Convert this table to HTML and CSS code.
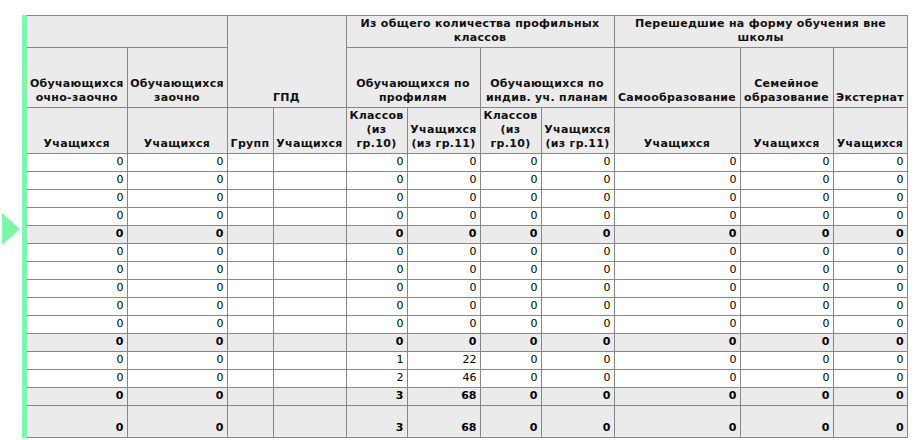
FILE: index.html
```html
<!DOCTYPE html>
<html lang="ru">
<head>
<meta charset="utf-8">
<title>Отчёт</title>
<link rel="stylesheet" href="styles.css">
</head>
<body>
<div class="wrap">
  <svg class="marker" width="18" height="32" viewBox="0 0 18 32"><polygon points="0,0 18,16 0,32" fill="#7ff5a8"/></svg>
  <div class="grid-box">
    <table class="grid">
      <colgroup>
        <col class="w100"><col class="w100"><col class="w46"><col class="w73">
        <col class="w61"><col class="w73"><col class="w61"><col class="w73">
        <col class="w126"><col class="w93"><col class="w74">
      </colgroup>
      <thead>
        <tr class="h1">
          <th colspan="2"></th>
          <th colspan="2" rowspan="2">ГПД</th>
          <th colspan="4">Из общего количества профильных<br>классов</th>
          <th colspan="3">Перешедшие на форму обучения вне<br>школы</th>
        </tr>
        <tr class="h2">
          <th>Обучающихся очно-заочно</th>
          <th>Обучающихся заочно</th>
          <th colspan="2">Обучающихся по профилям</th>
          <th colspan="2">Обучающихся по индив. уч. планам</th>
          <th>Самообразование</th>
          <th>Семейное образование</th>
          <th>Экстернат</th>
        </tr>
        <tr class="h3">
          <th>Учащихся</th>
          <th>Учащихся</th>
          <th>Групп</th>
          <th>Учащихся</th>
          <th>Классов (из гр.10)</th>
          <th>Учащихся (из гр.11)</th>
          <th>Классов (из гр.10)</th>
          <th>Учащихся (из гр.11)</th>
          <th>Учащихся</th>
          <th>Учащихся</th>
          <th>Учащихся</th>
        </tr>
      </thead>
      <tbody>
        <tr><td>0</td><td>0</td><td></td><td></td><td>0</td><td>0</td><td>0</td><td>0</td><td>0</td><td>0</td><td>0</td></tr>
        <tr><td>0</td><td>0</td><td></td><td></td><td>0</td><td>0</td><td>0</td><td>0</td><td>0</td><td>0</td><td>0</td></tr>
        <tr><td>0</td><td>0</td><td></td><td></td><td>0</td><td>0</td><td>0</td><td>0</td><td>0</td><td>0</td><td>0</td></tr>
        <tr><td>0</td><td>0</td><td></td><td></td><td>0</td><td>0</td><td>0</td><td>0</td><td>0</td><td>0</td><td>0</td></tr>
        <tr class="sum"><td>0</td><td>0</td><td></td><td></td><td>0</td><td>0</td><td>0</td><td>0</td><td>0</td><td>0</td><td>0</td></tr>
        <tr><td>0</td><td>0</td><td></td><td></td><td>0</td><td>0</td><td>0</td><td>0</td><td>0</td><td>0</td><td>0</td></tr>
        <tr><td>0</td><td>0</td><td></td><td></td><td>0</td><td>0</td><td>0</td><td>0</td><td>0</td><td>0</td><td>0</td></tr>
        <tr><td>0</td><td>0</td><td></td><td></td><td>0</td><td>0</td><td>0</td><td>0</td><td>0</td><td>0</td><td>0</td></tr>
        <tr><td>0</td><td>0</td><td></td><td></td><td>0</td><td>0</td><td>0</td><td>0</td><td>0</td><td>0</td><td>0</td></tr>
        <tr><td>0</td><td>0</td><td></td><td></td><td>0</td><td>0</td><td>0</td><td>0</td><td>0</td><td>0</td><td>0</td></tr>
        <tr class="sum"><td>0</td><td>0</td><td></td><td></td><td>0</td><td>0</td><td>0</td><td>0</td><td>0</td><td>0</td><td>0</td></tr>
        <tr><td>0</td><td>0</td><td></td><td></td><td>1</td><td>22</td><td>0</td><td>0</td><td>0</td><td>0</td><td>0</td></tr>
        <tr><td>0</td><td>0</td><td></td><td></td><td>2</td><td>46</td><td>0</td><td>0</td><td>0</td><td>0</td><td>0</td></tr>
        <tr class="sum"><td>0</td><td>0</td><td></td><td></td><td>3</td><td>68</td><td>0</td><td>0</td><td>0</td><td>0</td><td>0</td></tr>
        <tr class="sum total"><td>0</td><td>0</td><td></td><td></td><td>3</td><td>68</td><td>0</td><td>0</td><td>0</td><td>0</td><td>0</td></tr>
      </tbody>
    </table>
  </div>
</div>
</body>
</html>
```

FILE: styles.css
```css
html, body {
  margin: 0;
  padding: 0;
  background: #ffffff;
}

.wrap {
  position: relative;
  padding: 15px 0 0 22px;
  font-family: "DejaVu Sans", Verdana, sans-serif;
  color: #000;
}

.marker {
  position: absolute;
  left: 2px;
  top: 213px;
}

.grid-box {
  display: inline-block;
  border-left: 5px solid #7ff5a8;
}

.grid {
  border-collapse: collapse;
  table-layout: fixed;
  width: 880px;
  font-size: 11px;
  line-height: 14px;
}

.w100 { width: 100px; }
.w46 { width: 46px; }
.w73 { width: 73px; }
.w61 { width: 61px; }
.w126 { width: 126px; }
.w93 { width: 93px; }
.w74 { width: 74px; }

.grid th,
.grid td {
  border: 1px solid #878787;
  padding: 1px 3px 2px 3px;
}

.grid tr > :first-child {
  border-left: none;
}

.grid th {
  background: #ebebeb;
  font-weight: bold;
  text-align: center;
  vertical-align: bottom;
  padding: 1px 1px 2px 1px;
  letter-spacing: 0.3px;
  color: #111;
}

.grid td {
  text-align: right;
  vertical-align: middle;
  background: #ffffff;
}

.h1 { height: 32px; }
.h2 { height: 60px; }
.h3 { height: 46px; }

.grid tbody tr { height: 18px; }

.grid tr.sum td {
  background: #ebebeb;
  font-weight: bold;
}

.grid tbody tr.total { height: 32px; }

.grid tr.total td {
  vertical-align: bottom;
}
```
